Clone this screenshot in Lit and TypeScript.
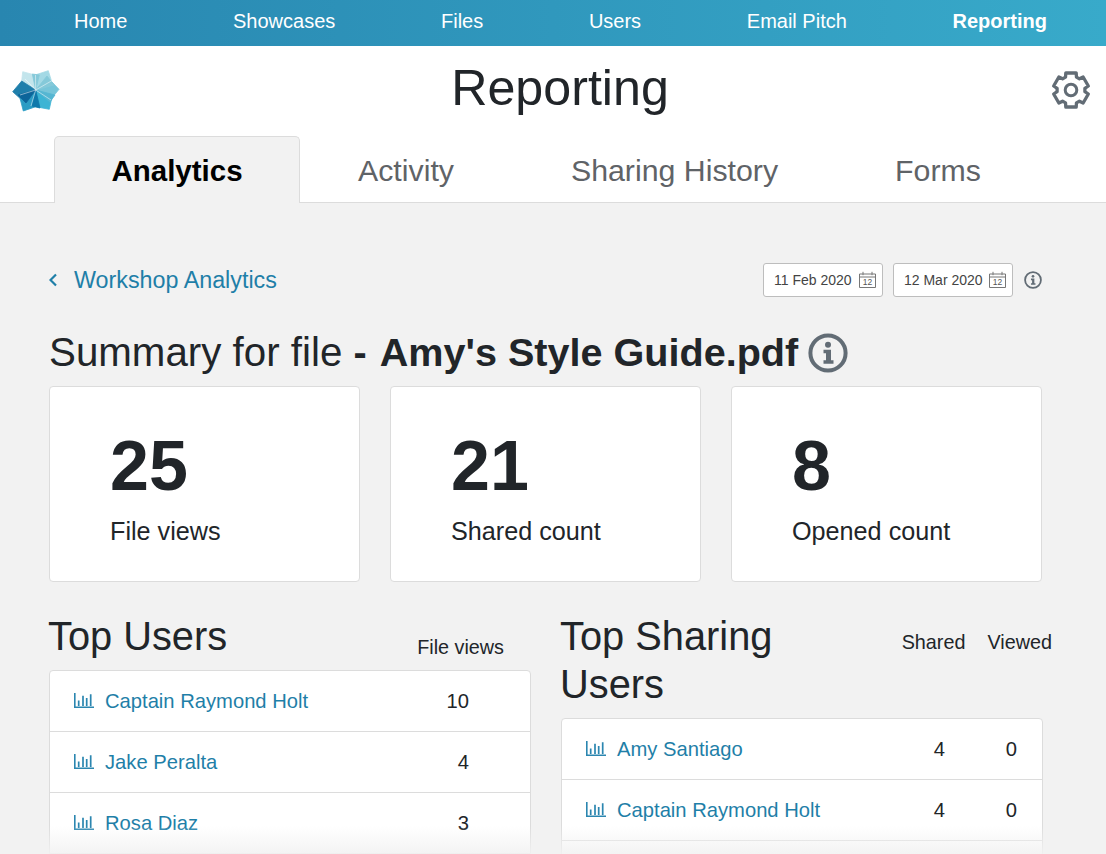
import { LitElement, html, css, svg } from "lit";
import { customElement } from "lit/decorators.js";

const bars = html`<svg class="bars" viewBox="0 0 20 16" width="20" height="16" aria-hidden="true">
  <path d="M.8 0v14.200H20" fill="none" stroke="currentColor" stroke-width="1.600"/>
  <path d="M4.700 13V7.500M9 13V2.700M12.700 13V5M16.700 13V1.300" fill="none" stroke="currentColor" stroke-width="1.700"/>
</svg>`;

const cal = html`<svg class="cal" viewBox="0 0 17 17" width="17" height="17" aria-hidden="true">
  <path d="M.5 3h16v13.500H.5zM.5 6h16M4 .8v3.400M13 .8v3.400" fill="none" stroke="#777" stroke-width="1"/>
  <text x="8.500" y="14" text-anchor="middle" font-size="8.500" fill="#555" font-family="Liberation Sans, sans-serif">12</text>
</svg>`;

const info = (s: number) => html`<svg viewBox="0 0 40 40" width=${s} height=${s} aria-hidden="true">
  <circle cx="20" cy="20" r="17.600" fill="none" stroke="#626c75" stroke-width="4"/>
  <circle cx="20" cy="11.800" r="3" fill="#626c75"/>
  <path d="M15.500 16.800h7.500v10.500h2.500v3.500h-10v-3.500h2.500v-7h-2.500z" fill="#626c75"/>
</svg>`;

const kite: [string, string][] = [
  ["M35.700 90L21.700 81 22.700 71.700 35 75z", "#c3e5ec"],
  ["M35.700 90L35 75 48.300 70.700 51.700 81.700z", "#a3d9e5"],
  ["M35.700 90L51.700 81.700 59 89.300 51.700 98.300z", "#77c5d9"],
  ["M35.700 90L51.700 98.300 49.300 109.300 35.700 106.700z", "#3cb4d4"],
  ["M35.700 90L35.700 106.700 23.300 111 20 98.300z", "#2a9cc4"],
  ["M35.700 90L20 98.300 12.700 91.700 21.700 81z", "#1f7fab"],
  ["M35.700 90L32.300 74 39.300 75z", "#85c9d9"],
  ["M35.700 90L47 76 54 85z", "#85c9d9"],
  ["M35.700 90L55 95 50 102z", "#55b6d2"],
  ["M35.700 90L32 106 40 108z", "#0f79ab"],
  ["M35.700 90L26 103 18 95z", "#0c659a"],
];

const logo = html`<svg class="logo" viewBox="12 70 48 42" width="48" height="42" aria-hidden="true">
  ${kite.map(([d, c]) => svg`<path d=${d} fill=${c} stroke=${c} stroke-width=".8" stroke-linejoin="round"/>`)}
  <path d="M35.700 90L20 95M35.700 90L31 106M35.700 90L53 80M35.700 90L35.500 75M35.700 90L25 79M35.700 90L51 100" stroke="#fff" stroke-width=".5" fill="none"/>
</svg>`;

const pt = (r: number, deg: number) => {
  const a = (deg * Math.PI) / 180;
  return `${(20 + r * Math.cos(a)).toFixed(2)} ${(20 + r * Math.sin(a)).toFixed(2)}`;
};
const gearPath = () => {
  const parts: string[] = [];
  for (let k = 0; k < 6; k++) {
    const c = -90 + 60 * k;
    parts.push(pt(14, c - 23), pt(17.800, c - 17), pt(17.800, c + 17), pt(14, c + 23));
  }
  return "M" + parts.join("L") + "z";
};

const gear = html`<svg class="gear" viewBox="0 0 40 40" width="40" height="40" aria-hidden="true">
  <path fill="none" stroke="#626c75" stroke-width="3.300" stroke-linejoin="round" d=${gearPath()}/>
  <circle cx="20" cy="20" r="5.800" fill="none" stroke="#626c75" stroke-width="3"/>
</svg>`;

@customElement("app-root")
export class AppRoot extends LitElement {
  static styles = css`
    :host { display: block; position: relative; height: 854px; overflow: hidden; background: #f2f2f2; color: #212529;
      font-family: "Liberation Sans", Arial, sans-serif; }
    nav { height: 46px; box-sizing: border-box; padding: 0 59px 4px 74px; display: flex; justify-content: space-between; align-items: center;
      background: linear-gradient(90deg, #2886b0, #38aaca); color: #fff; font-size: 20px; }
    nav .on { font-weight: 700; font-size: 20px; }
    .top { background: #fff; border-bottom: 1px solid #dcdcdc; height: 157px; box-sizing: border-box; display: flex; flex-direction: column; }
    .head { display: flex; justify-content: space-between; align-items: center; padding: 8px 15px 0 12px; height: 76px; box-sizing: border-box; }
    .logo-box { width: 57px; display: flex; margin-top: 6px; }
    h1 { margin: 0; font-size: 50.200px; font-weight: 400; line-height: 56px; }
    .gear { display: block; margin-top: 4px; }
    .tabs { display: flex; margin-top: auto; padding-left: 54px; height: 67px; margin-bottom: -1px; }
    .tab { display: flex; align-items: center; justify-content: center; font-size: 30.300px; color: #5f6367; padding-top: 2px; box-sizing: border-box; }
    .tab.active { width: 246px; font-size: 29.500px; font-weight: 700; color: #000; background: #f2f2f2; border: 1px solid #dcdcdc; border-bottom: 0; border-radius: 5px 5px 0 0; }
    .t2 { margin-left: 58px; }
    .t3 { margin-left: 117px; }
    .t4 { margin-left: 117px; }
    main { padding: 60px 64px 0 49px; }
    .bar { display: flex; align-items: center; height: 34px; }
    .back { display: flex; align-items: center; gap: 17px; color: #1f7fa8; font-size: 23.300px; flex: 1; }
    .date { width: 120px; height: 34px; box-sizing: border-box; margin-left: 10px; background: #fff; border: 1px solid #bdbdbd; border-radius: 3px;
      display: flex; align-items: center; justify-content: space-between; padding: 0 6px 0 10px; font-size: 14px; color: #444; }
    .cal { display: block; margin-top: -2px; }
    .barinfo { margin-left: 11px; display: block; width: 18px; height: 18px; }
    h2 { margin: 33px 0 12px; height: 44px; font-size: 40.300px; font-weight: 400; line-height: 44px; white-space: pre; }
    h2 b { font-weight: 700; font-size: 39.600px; }
    h2 b span { word-spacing: 2px; }
    h2 svg { margin-left: 10px; vertical-align: -7px; }
    .cards { display: flex; gap: 30px; }
    .card { flex: 1; height: 196px; box-sizing: border-box; background: #fff; border: 1px solid #dcdcdc; border-radius: 4px; padding: 41px 60px 0; }
    .num { font-size: 70px; font-weight: 700; line-height: 76px; }
    .lbl { font-size: 25.200px; line-height: 28px; margin-top: 13px; color: #212529; }
    .cols { display: flex; gap: 30px; margin-top: 31px; margin-right: -1px; }
    .col { flex: 1; min-width: 0; }
    .colhead { display: flex; align-items: flex-start; justify-content: space-between; margin-bottom: 9px; }
    h3 { margin: -1px 0 1px -1px; font-size: 39.800px; font-weight: 400; line-height: 48px; width: 280px; }
    .heads { display: flex; gap: 22px; font-size: 19.800px; line-height: 24px; padding-top: 16px; }
    .heads.one { padding-right: 27px; padding-top: 22px; }
    .heads.two { margin-right: -9px; padding-top: 17px; }
    .list { background: #fff; border: 1px solid #dcdcdc; border-radius: 4px; }
    .row { display: flex; align-items: center; height: 61px; padding: 0 14px 0 24px; box-sizing: border-box; font-size: 20.200px; border-bottom: 1px solid #dcdcdc; }
    .row:last-child { border-bottom: 0; }
    .name { flex: 1; color: #1f7fa8; display: flex; align-items: center; gap: 11px; }
    .bars { display: block; color: #2b86b0; }
    .v { width: 72px; text-align: right; }
    .one-v { padding-right: 61px; }
    .two-v { padding-right: 25px; }
    .fade { position: absolute; left: 0; right: 0; bottom: 0; height: 28px; pointer-events: none;
      background: linear-gradient(rgba(242,242,242,0), rgba(242,242,242,.9)); }
  `;

  render() {
    return html`
      <nav>
        <span>Home</span><span>Showcases</span><span>Files</span><span>Users</span><span>Email Pitch</span><span class="on">Reporting</span>
      </nav>
      <section class="top">
        <div class="head">
          <div class="logo-box">${logo}</div>
          <h1>Reporting</h1>
          ${gear}
        </div>
        <div class="tabs">
          <div class="tab active">Analytics</div>
          <div class="tab t2">Activity</div>
          <div class="tab t3">Sharing History</div>
          <div class="tab t4">Forms</div>
        </div>
      </section>
      <main>
        <div class="bar">
          <div class="back">
            <svg viewBox="0 0 8 14" width="8" height="14" aria-hidden="true"><path d="M7 1.500L1.500 7 7 12.500" fill="none" stroke="#1f7fa8" stroke-width="2.200"/></svg>
            <span>Workshop Analytics</span>
          </div>
          <div class="date"><span>11 Feb 2020</span>${cal}</div>
          <div class="date"><span>12 Mar 2020</span>${cal}</div>
          <span class="barinfo">${info(18)}</span>
        </div>
        <h2>Summary for file <b><span>- </span>Amy's Style Guide.pdf</b>${info(40)}</h2>
        <div class="cards">
          <div class="card"><div class="num">25</div><div class="lbl">File views</div></div>
          <div class="card"><div class="num">21</div><div class="lbl">Shared count</div></div>
          <div class="card"><div class="num">8</div><div class="lbl">Opened count</div></div>
        </div>
        <div class="cols">
          <div class="col">
            <div class="colhead"><h3>Top Users</h3><div class="heads one"><span>File views</span></div></div>
            <div class="list">
              ${[["Captain Raymond Holt", "10"], ["Jake Peralta", "4"], ["Rosa Diaz", "3"]].map(([n, v]) => html`
                <div class="row one-v"><span class="name">${bars}${n}</span><span class="v">${v}</span></div>`)}
              <div class="row"></div>
            </div>
          </div>
          <div class="col">
            <div class="colhead"><h3>Top Sharing Users</h3><div class="heads two"><span>Shared</span><span>Viewed</span></div></div>
            <div class="list">
              ${[["Amy Santiago", "4", "0"], ["Captain Raymond Holt", "4", "0"]].map(([n, a, b]) => html`
                <div class="row two-v"><span class="name">${bars}${n}</span><span class="v">${a}</span><span class="v">${b}</span></div>`)}
              <div class="row"></div>
            </div>
          </div>
        </div>
      </main>
      <div class="fade"></div>
    `;
  }
}
